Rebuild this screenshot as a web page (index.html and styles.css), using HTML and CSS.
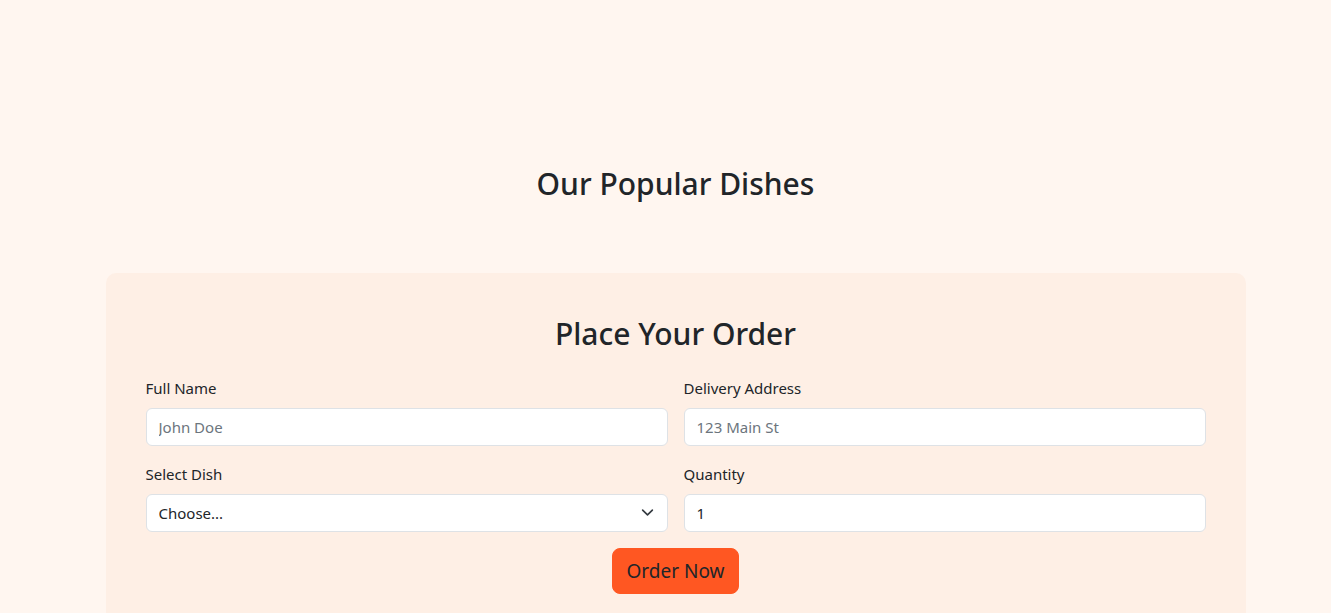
FILE: index.html
```html
<!DOCTYPE html>
<html lang="en">
<head>
<meta charset="utf-8">
<title>Order</title>
<link rel="stylesheet" href="styles.css">
</head>
<body>
<section class="dishes">
  <h2 class="section-title">Our Popular Dishes</h2>
</section>
<section class="order">
  <div class="order-card">
    <h2 class="order-title">Place Your Order</h2>
    <form class="order-form">
      <div class="field">
        <label for="name">Full Name</label>
        <input id="name" class="control" type="text" placeholder="John Doe">
      </div>
      <div class="field">
        <label for="addr">Delivery Address</label>
        <input id="addr" class="control" type="text" placeholder="123 Main St">
      </div>
      <div class="field">
        <label for="dish">Select Dish</label>
        <div class="select-wrap">
          <select id="dish" class="control select">
            <option>Choose...</option>
          </select>
          <svg class="chevron" width="16" height="16" viewBox="0 0 16 16"><path d="M2 5l6 6 6-6" fill="none" stroke="#343a40" stroke-width="2" stroke-linecap="round" stroke-linejoin="round"/></svg>
        </div>
      </div>
      <div class="field">
        <label for="qty">Quantity</label>
        <input id="qty" class="control" type="number" value="1">
      </div>
      <div class="actions">
        <button type="button" class="btn-order">Order Now</button>
      </div>
    </form>
  </div>
</section>
</body>
</html>
```

FILE: styles.css
```css
* { box-sizing: border-box; }
html, body { margin: 0; padding: 0; }
body {
  background: #fff6f0;
  font-family: "Noto Sans", "Open Sans", sans-serif;
  color: #212529;
  font-size: 16px;
  line-height: 1.5;
  padding-left: 20px;
}
.dishes {
  padding-top: 166px;
  padding-bottom: 71px;
}
.section-title, .order-title {
  margin: 0;
  text-align: center;
  font-size: 30px;
  font-weight: 500;
  line-height: 1.2;
  color: #212529;
}
.order {
  width: 1140px;
  margin: 0 auto;
}
.order-card {
  background: #feefe5;
  border-radius: 10px;
  padding: 43px 40px 40px;
}
.order-title {
  margin-bottom: 24px;
}
.order-form {
  display: grid;
  grid-template-columns: 1fr 1fr;
  column-gap: 16px;
  row-gap: 16px;
}
.field label {
  display: block;
  font-size: 15px;
  line-height: 24px;
  margin-bottom: 8px;
}
.control {
  display: block;
  width: 100%;
  height: 38px;
  padding: 6px 12px;
  font: inherit;
  font-size: 15px;
  color: #212529;
  background: #fff;
  border: 1px solid #dee2e6;
  border-radius: 6px;
  appearance: none;
  -webkit-appearance: none;
  -moz-appearance: textfield;
}
.control::placeholder { color: #6c757d; }
.control::-webkit-outer-spin-button,
.control::-webkit-inner-spin-button { -webkit-appearance: none; margin: 0; }
.select-wrap { position: relative; }
.select { padding-right: 36px; }
.chevron {
  position: absolute;
  right: 14px;
  top: 12px;
  width: 13px;
  height: 13px;
  pointer-events: none;
}
.actions {
  grid-column: 1 / -1;
  display: flex;
  justify-content: center;
}
.btn-order {
  font: inherit;
  font-size: 19px;
  line-height: 27px;
  padding: 9px 14px 8px;
  color: #212529;
  background: #ff5722;
  border: 1px solid #ff5722;
  border-radius: 8px;
  cursor: pointer;
}
```
